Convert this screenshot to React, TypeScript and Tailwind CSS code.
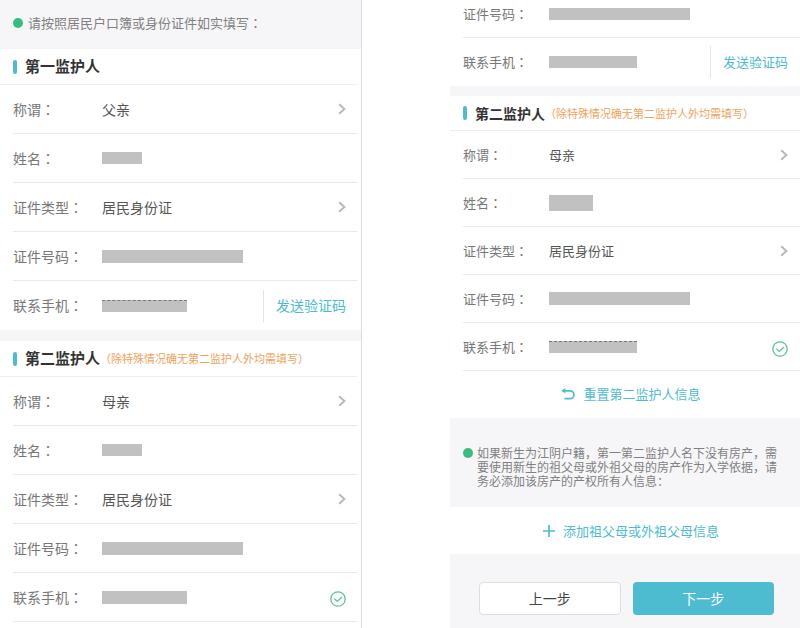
import { ReactNode } from 'react';
import clsx from 'clsx';

type Field = {
  id: string;
  label: string;
  kind: 'select' | 'masked';
  value?: string;
  mask?: string;
  extra?: 'code' | 'valid';
};

const relations = ['父亲', '母亲'];
const certTypes = ['居民身份证'];

const firstGuardian: Field[] = [
  { id: 'g1-relation', label: '称谓', kind: 'select', value: '父亲' },
  { id: 'g1-name', label: '姓名', kind: 'masked', mask: 'h-3 w-10' },
  { id: 'g1-type', label: '证件类型', kind: 'select', value: '居民身份证' },
  { id: 'g1-number', label: '证件号码', kind: 'masked', mask: 'h-[13px] w-[141px]' },
  {
    id: 'g1-phone',
    label: '联系手机',
    kind: 'masked',
    mask: 'h-3 w-[85px] border-t border-dashed border-[#777]',
    extra: 'code',
  },
];

const secondGuardian: Field[] = [
  { id: 'g2-relation', label: '称谓', kind: 'select', value: '母亲' },
  { id: 'g2-name', label: '姓名', kind: 'masked', mask: 'h-3 w-10' },
  { id: 'g2-type', label: '证件类型', kind: 'select', value: '居民身份证' },
  { id: 'g2-number', label: '证件号码', kind: 'masked', mask: 'h-[13px] w-[141px]' },
  {
    id: 'g2-phone',
    label: '联系手机',
    kind: 'masked',
    mask: 'h-[13px] w-[85px]',
    extra: 'valid',
  },
];

const scrolledFirst: Field[] = [
  { id: 's1-number', label: '证件号码', kind: 'masked', mask: 'h-3 w-[141px]' },
  { id: 's1-phone', label: '联系手机', kind: 'masked', mask: 'h-3 w-[88px]', extra: 'code' },
];

const scrolledSecond: Field[] = [
  { id: 's2-relation', label: '称谓', kind: 'select', value: '母亲' },
  { id: 's2-name', label: '姓名', kind: 'masked', mask: 'h-4 w-11' },
  { id: 's2-type', label: '证件类型', kind: 'select', value: '居民身份证' },
  { id: 's2-number', label: '证件号码', kind: 'masked', mask: 'h-[13px] w-[141px]' },
  {
    id: 's2-phone',
    label: '联系手机',
    kind: 'masked',
    mask: 'h-3 w-[88px] border-t border-dashed border-[#777]',
    extra: 'valid',
  },
];

// centred full-width punctuation
function Mark({ children }: { children: ReactNode }) {
  return <span className="font-['Noto_Sans_CJK_TC',sans-serif]">{children}</span>;
}

function Chevron() {
  return (
    <svg
      className="h-3 w-2 shrink-0"
      viewBox="0 0 8 12"
      fill="none"
      stroke="#b9b9bc"
      strokeWidth={2}
      aria-hidden="true"
    >
      <path d="M1.2 1.2L6.4 6l-5.2 4.8" />
    </svg>
  );
}

function ValidIcon() {
  return (
    <svg
      className="mt-1 size-4 shrink-0"
      viewBox="0 0 16 16"
      fill="none"
      stroke="#5cc596"
      strokeWidth={1.3}
      aria-hidden="true"
    >
      <circle cx="8" cy="8" r="7.2" />
      <path d="M4.4 7.6l2.8 2.8 4.8-4.4" />
    </svg>
  );
}

function FieldRow({ field, small, last }: { field: Field; small?: boolean; last?: boolean }) {
  const options = field.label === '称谓' ? relations : certTypes;

  return (
    <div
      className={clsx(
        'ml-[13px] flex items-center',
        small ? 'h-12 pr-3 text-[13px]' : 'mr-1 h-[49px] pr-[11px] text-[14px]',
        !last && 'border-b border-[#e9e9eb]',
      )}
    >
      <label
        htmlFor={field.id}
        className={clsx('shrink-0 text-[#777]', small ? 'w-[86px]' : 'w-[89px]')}
      >
        {field.label}
        <Mark>：</Mark>
      </label>
      {field.kind === 'select' ? (
        <>
          <select
            id={field.id}
            defaultValue={field.value}
            className="min-w-0 flex-1 appearance-none bg-transparent text-[#555] outline-none"
          >
            {options.map((option) => (
              <option key={option}>{option}</option>
            ))}
          </select>
          <Chevron />
        </>
      ) : (
        <div className="flex min-w-0 flex-1">
          <input id={field.id} readOnly className={clsx('bg-[#c1c1c1] outline-none', field.mask)} />
        </div>
      )}
      {field.extra === 'code' && (
        <button type="button" className="h-8 shrink-0 border-l border-[#e4e4e6] pl-3 text-[#4dbcd0]">
          发送验证码
        </button>
      )}
      {field.extra === 'valid' && <ValidIcon />}
    </div>
  );
}

function SectionTitle({ title, note, small }: { title: string; note?: string; small?: boolean }) {
  return (
    <div
      className={clsx(
        'flex items-center border-b border-[#eeeef0] pl-[13px]',
        small ? 'h-[35px]' : 'mr-1 h-9',
      )}
    >
      <span className="mr-2 h-[14px] w-1 rounded-sm bg-[#4dbcd0]" />
      <h2 className={clsx('font-bold text-[#333]', small ? 'text-[14px]' : 'text-[15px]')}>
        {title}
      </h2>
      {note && <span className="text-[11px] whitespace-nowrap text-[#f0a35c]">（{note}）</span>}
    </div>
  );
}

function Fields({ fields, small, open }: { fields: Field[]; small?: boolean; open?: boolean }) {
  return (
    <>
      {fields.map((field, i) => (
        <FieldRow
          key={field.id}
          field={field}
          small={small}
          last={open && i === fields.length - 1}
        />
      ))}
    </>
  );
}

const note = '除特殊情况确无第二监护人外均需填写';

export default function App() {
  return (
    <main className="grid min-h-screen grid-cols-[362fr_88fr_350fr] overflow-hidden bg-white font-['Noto_Sans_CJK_SC',sans-serif]">
      <form className="col-start-1 border-r border-[#dcdce0]">
        <div className="flex h-[49px] items-center bg-[#f6f6f8] pb-1 pl-[13px] text-[13px] text-[#808080]">
          <span className="mr-[5px] size-[10px] rounded-full bg-[#35bd82]" />
          <p>
            请按照居民户口簿或身份证件如实填写<Mark>：</Mark>
          </p>
        </div>
        <SectionTitle title="第一监护人" />
        <Fields fields={firstGuardian} open />
        <div className="h-[11px] bg-[#f6f6f7]" />
        <SectionTitle title="第二监护人" note={note} />
        <Fields fields={secondGuardian} />
      </form>

      <form className="col-start-3 -mt-[10px] flex flex-col">
        <Fields fields={scrolledFirst} small open />
        <div className="h-[10px] bg-[#f6f6f8]" />
        <SectionTitle title="第二监护人" note={note} small />
        <Fields fields={scrolledSecond} small />
        <button
          type="button"
          className="flex h-[47px] items-center justify-center gap-2 pb-[2px] pl-3 text-[13px] text-[#4dbcd0]"
        >
          <svg
            className="h-3 w-[14px]"
            viewBox="0 0 14 12"
            fill="none"
            stroke="currentColor"
            strokeWidth={1.7}
            aria-hidden="true"
          >
            <path d="M1.5 2.8H9a3.9 3.9 0 0 1 0 7.9H3.5" />
            <path d="M4.4 0L.2 2.8l4.2 2.8z" fill="currentColor" stroke="none" />
          </svg>
          重置第二监护人信息
        </button>
        <div className="flex h-[89px] items-center bg-[#f6f6f8] pt-2 pr-4 pl-[13px]">
          <span className="mr-1 mb-7 size-[10px] shrink-0 rounded-full bg-[#35bd82]" />
          <p className="text-[12px] leading-[14px] text-[#808080]">
            如果新生为江阴户籍，第一第二监护人名下没有房产，需要使用新生的祖父母或外祖父母的房产作为入学依据，请务必添加该房产的产权所有人信息：
          </p>
        </div>
        <button
          type="button"
          className="flex h-[47px] items-center justify-center gap-2 pl-3 text-[13px] text-[#4dbcd0]"
        >
          <svg
            className="size-3"
            viewBox="0 0 12 12"
            stroke="currentColor"
            strokeWidth={1.7}
            aria-hidden="true"
          >
            <path d="M6 0v12M0 6h12" />
          </svg>
          添加祖父母或外祖父母信息
        </button>
        <div className="grid flex-1 grid-cols-2 items-start gap-3 bg-[#f6f6f8] pt-7 pr-[26px] pb-3 pl-[29px] text-[14px]">
          <button
            type="button"
            className="h-[33px] rounded border border-[#dedee2] bg-white text-[#444]"
          >
            上一步
          </button>
          <button type="button" className="h-[33px] rounded bg-[#4dbcd0] text-white">
            下一步
          </button>
        </div>
      </form>
    </main>
  );
}
